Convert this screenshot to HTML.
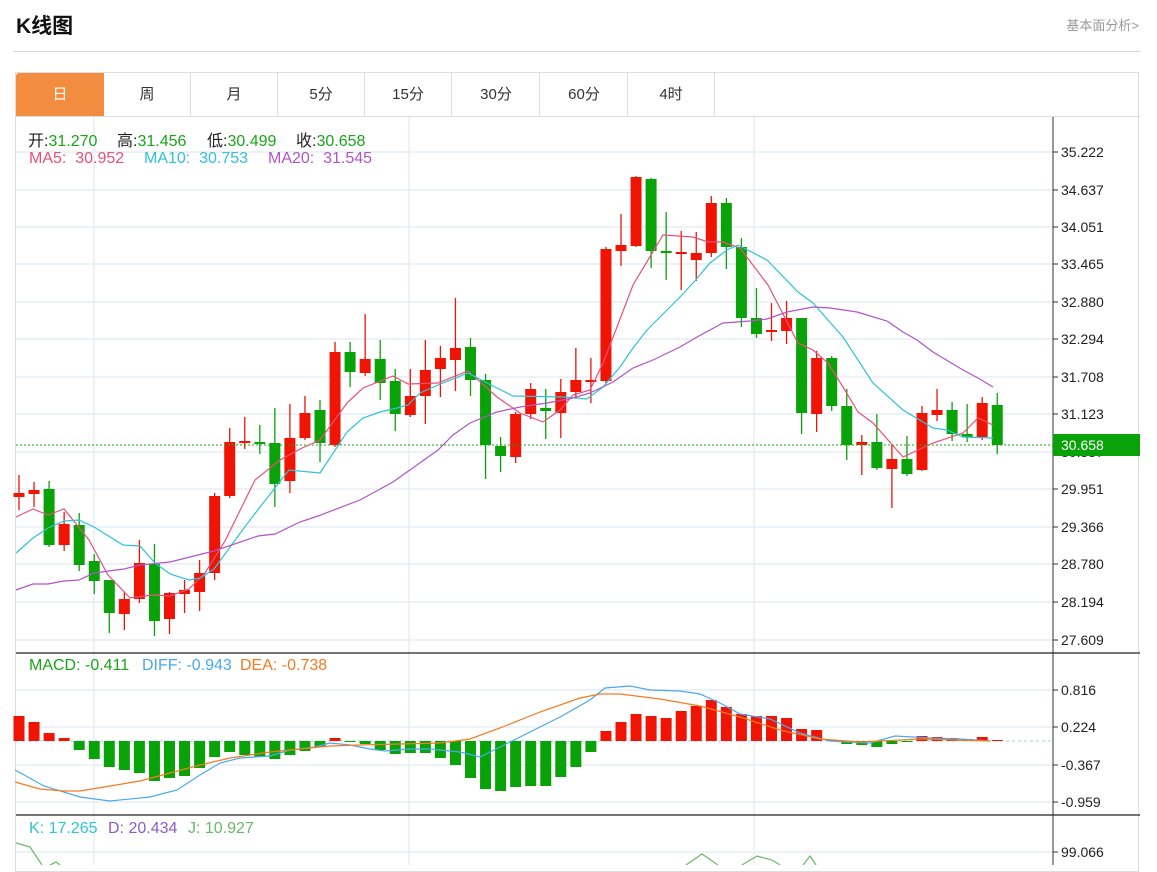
<!DOCTYPE html>
<html><head><meta charset="utf-8">
<style>
html,body{margin:0;padding:0;background:#fff;width:1157px;height:865px;overflow:hidden;font-family:"Liberation Sans","Noto Sans CJK SC",sans-serif;}
#t{position:absolute;left:16px;top:10px;font-size:21px;font-weight:bold;color:#111;}
#r{position:absolute;right:18px;top:15px;font-size:13px;color:#999;}
#hl{position:absolute;left:13px;top:51px;width:1127px;height:1px;background:#d4d4d4;}
#box{position:absolute;left:15px;top:72px;width:1124px;height:800px;border:1px solid #ddd;box-sizing:border-box;}
.tab{position:absolute;top:73px;height:43px;width:87px;border-right:1px solid #ddd;text-align:center;line-height:43px;font-size:15px;color:#333;box-sizing:border-box;}
#tb{position:absolute;left:15px;top:116px;width:1125px;height:1px;background:#ddd;}
svg{position:absolute;left:0;top:0;}
.i{position:absolute;font-size:16px;white-space:pre;}
</style></head><body>
<div id="t">K线图</div>
<div id="r">基本面分析&gt;</div>
<div id="hl"></div>
<div id="box"></div>
<div class="tab" style="left:16px;background:#f28c3e;color:#fff;border-radius:3px 0 0 0;border-right:none;width:88px">日</div>
<div class="tab" style="left:104px">周</div>
<div class="tab" style="left:191px">月</div>
<div class="tab" style="left:278px">5分</div>
<div class="tab" style="left:365px">15分</div>
<div class="tab" style="left:453px">30分</div>
<div class="tab" style="left:541px">60分</div>
<div class="tab" style="left:628px">4时</div>
<div id="tb"></div>
<svg id="s" width="1157" height="865"></svg>
<div class="i" style="top:127px;left:28px"><span style="color:#222">开:</span><span style="color:#1aa51a">31.270</span></div>
<div class="i" style="top:127px;left:117px"><span style="color:#222">高:</span><span style="color:#1aa51a">31.456</span></div>
<div class="i" style="top:127px;left:207px"><span style="color:#222">低:</span><span style="color:#1aa51a">30.499</span></div>
<div class="i" style="top:127px;left:296px"><span style="color:#222">收:</span><span style="color:#1aa51a">30.658</span></div>
<div class="i" style="top:150px;left:29px;color:#e8507a">MA5:  30.952</div>
<div class="i" style="top:150px;left:144px;color:#2ec3d8">MA10:  30.753</div>
<div class="i" style="top:150px;left:268px;color:#b055c8">MA20:  31.545</div>
<div class="i" style="top:657px;left:29px;color:#1aa51a">MACD: -0.411</div>
<div class="i" style="top:657px;left:142px;color:#4aa8f0">DIFF: -0.943</div>
<div class="i" style="top:657px;left:240px;color:#f57a20">DEA: -0.738</div>
<div class="i" style="top:820px;left:29px;color:#2ec3d8">K: 17.265</div>
<div class="i" style="top:820px;left:108px;color:#8a5cc8">D: 20.434</div>
<div class="i" style="top:820px;left:188px;color:#6ab86a">J: 10.927</div>
<script>
var s='';
function L(x1,y1,x2,y2,c,w,extra){s+='<line x1="'+x1+'" y1="'+y1+'" x2="'+x2+'" y2="'+y2+'" stroke="'+c+'" stroke-width="'+(w||1)+'" '+(extra||'')+'/>';}
function P(pts,c){s+='<polyline fill="none" stroke="'+c+'" stroke-width="1.2" points="'+pts.map(function(p){return p.join(',')}).join(' ')+'"/>';}
function T(x,y,t,c,a){s+='<text x="'+x+'" y="'+y+'" font-size="14" fill="'+(c||'#222')+'" font-family="Liberation Sans,sans-serif"'+(a?' text-anchor="'+a+'"':'')+'>'+t+'</text>';}
var gy=[152,190,227,264,302,339,377,414,452,489,527,564,602,640];
gy.forEach(function(y){L(16,y,1053,y,'#e6eef4',1.5);});
[690,727,765,802].forEach(function(y){L(16,y,1053,y,'#e6eef4',1.5);});
L(16,852,1053,852,'#e6eef4',1.5);
[94,409,754].forEach(function(x){L(x,117,x,865,'#e6eef4',1.5);});
L(1053,117,1053,865,'#333',1);
var lab=['35.222','34.637','34.051','33.465','32.880','32.294','31.708','31.123','30.537','29.951','29.366','28.780','28.194','27.609'];
gy.forEach(function(y,i){L(1053,y,1058,y,'#333',1);T(1061,y+5,lab[i]);});
[[690,'0.816'],[727,'0.224'],[765,'-0.367'],[802,'-0.959'],[852,'99.066']].forEach(function(a){L(1053,a[0],1058,a[0],'#333',1);T(1061,a[0]+5,a[1]);});
L(16,653,1140,653,'#222',1.2);L(16,815,1140,815,'#222',1.2);
var C=[[493,497,475,510,'r'],[490,494,482,507,'r'],[489,545,481,547,'g'],[524,545,512,551,'r'],[525,565,513,571,'g'],[561,581,554,594,'g'],[580,613,580,633,'g'],[599,614,592,630,'r'],[563,599,540,603,'r'],[564,621,544,636,'g'],[593,619,592,634,'r'],[590,594,580,613,'r'],[573,592,560,611,'r'],[496,573,493,580,'r'],[442,496,428,498,'r'],[441,443,417,449,'r'],[442,444,425,454,'g'],[443,484,408,507,'g'],[438,481,404,493,'r'],[413,438,396,440,'r'],[410,443,400,462,'g'],[352,445,342,447,'r'],[352,372,342,387,'g'],[359,373,314,376,'r'],[359,383,340,400,'g'],[381,414,369,431,'g'],[396,415,369,417,'r'],[370,396,340,424,'r'],[358,369,346,397,'r'],[348,360,298,391,'r'],[347,380,338,396,'g'],[380,445,374,479,'g'],[446,456,437,472,'g'],[414,457,412,463,'r'],[389,414,383,419,'r'],[408,411,389,439,'g'],[392,413,379,438,'r'],[380,392,348,398,'r'],[380,381,358,403,'r'],[249,381,247,383,'r'],[245,251,214,266,'r'],[177,246,176,247,'r'],[179,251,178,268,'g'],[251,253,212,280,'g'],[252,253,231,290,'r'],[253,260,232,281,'r'],[203,253,196,257,'r'],[203,247,198,269,'g'],[247,318,238,327,'g'],[318,334,288,338,'g'],[330,331,303,341,'r'],[318,331,301,344,'r'],[318,413,318,434,'g'],[358,414,351,432,'r'],[358,406,356,411,'g'],[406,445,389,460,'g'],[442,445,435,475,'r'],[442,468,414,470,'g'],[459,469,445,508,'r'],[459,474,436,476,'g'],[413,470,406,471,'r'],[410,415,389,421,'r'],[410,434,402,441,'g'],[434,437,404,442,'g'],[403,437,397,440,'r'],[405,445,393,454,'g']];
C.forEach(function(c,i){var x=19+i*15.05;var col=c[4]=='r'?'#f01405':'#09a309';
L(x,c[2],x,c[3],col,1.3);var h=Math.max(c[1]-c[0],2);s+='<rect x="'+(x-5.5)+'" y="'+c[0]+'" width="11" height="'+h+'" fill="'+col+'"/>';});
P([[16,517],[33,509],[48,515],[64,509],[89,540],[108,575],[130,598],[153,595],[170,596],[189,589],[205,573],[225,541],[255,480],[280,460],[300,449],[320,440],[347,403],[363,388],[393,376],[408,384],[438,383],[468,371],[497,397],[520,413],[543,422],[560,410],[573,395],[590,390],[603,363],[617,327],[633,285],[663,235],[693,237],[708,242],[723,242],[740,248],[768,285],[798,343],[813,350],[828,363],[843,387],[858,412],[873,423],[903,457],[933,443],[963,433],[978,418],[993,425]],'#e8507a');
P([[16,553],[33,538],[48,528],[64,521],[79,520],[94,527],[123,545],[140,546],[155,563],[170,574],[189,580],[200,578],[214,569],[244,528],[260,507],[289,470],[320,473],[347,432],[363,418],[380,412],[397,408],[408,405],[420,393],[438,385],[468,373],[487,383],[513,396],[563,397],[587,399],[603,387],[620,367],[633,348],[647,330],[680,297],[693,283],[710,263],[727,250],[738,245],[767,260],[798,292],[813,303],[843,337],[873,383],[903,410],[933,428],[947,430],[963,437],[993,438]],'#2ec3d8');
P([[16,590],[33,584],[48,584],[64,581],[79,580],[94,573],[124,569],[140,565],[170,562],[214,551],[258,536],[275,534],[300,522],[318,516],[360,500],[393,482],[438,450],[453,435],[470,423],[497,412],[520,407],[547,403],[573,398],[590,393],[613,382],[633,368],[653,360],[680,347],[697,337],[723,323],[750,321],[767,319],[787,312],[813,307],[830,308],[857,312],[887,321],[903,332],[917,340],[933,352],[963,370],[978,378],[993,387]],'#b055c8');
L(16,445,1053,445,'#1aa51a',1,'stroke-dasharray="2,2"');
s+='<rect x="1053" y="434" width="87" height="22" fill="#09a309"/>';T(1061,450,'30.658','#fff');
L(16,741,1053,741,'#aaccdd',1,'stroke-dasharray="3,3"');
var M=[716,722,733,738,750,759,767,770,773,781,778,776,768,757,752,755,757,759,755,751,747,738,742,744,750,754,753,753,758,765,778,789,791,787,786,786,777,767,752,731,722,714,716,718,711,706,700,707,714,716,716,718,729,730,740,744,745,747,744,742,736,737,738,739,737,740];
M.forEach(function(v,i){var x=19+i*15.05;var col=(v<741)?'#f01405':'#09a309';var y=Math.min(v,741),h=Math.max(Math.abs(v-741),1);s+='<rect x="'+(x-5.5)+'" y="'+y+'" width="11" height="'+h+'" fill="'+col+'"/>';});
P([[15,770],[44,786],[80,797],[110,801],[150,797],[177,790],[200,775],[220,763],[240,758],[270,756],[290,750],[315,747],[330,743],[350,745],[370,749],[385,751],[410,749],[430,749],[460,752],[480,757],[500,747],[520,737],[560,717],[590,700],[605,688],[630,686],[650,690],[680,691],[700,694],[720,703],[740,714],[770,719],[800,733],[830,741],[870,743],[895,736],[930,738],[960,739],[990,741]],'#4aa8f0');
P([[15,782],[40,789],[64,791],[80,791],[110,786],[140,781],[170,773],[200,765],[230,758],[270,752],[300,749],[330,746],[360,745],[400,744],[440,743],[470,739],[500,728],[540,712],[580,698],[600,694],[620,694],[660,699],[700,706],[740,717],[780,730],[820,739],[860,742],[920,739],[990,741]],'#f57a20');
P([[16,843],[30,847],[42,865]],'#6ab86a');
P([[50,865],[56,862],[60,865]],'#6ab86a');
P([[686,865],[702,854],[718,865]],'#6ab86a');P([[742,865],[757,856],[772,860],[780,865]],'#6ab86a');P([[803,865],[810,856],[816,865]],'#6ab86a');
document.getElementById('s').innerHTML=s;
</script>
</body></html>
